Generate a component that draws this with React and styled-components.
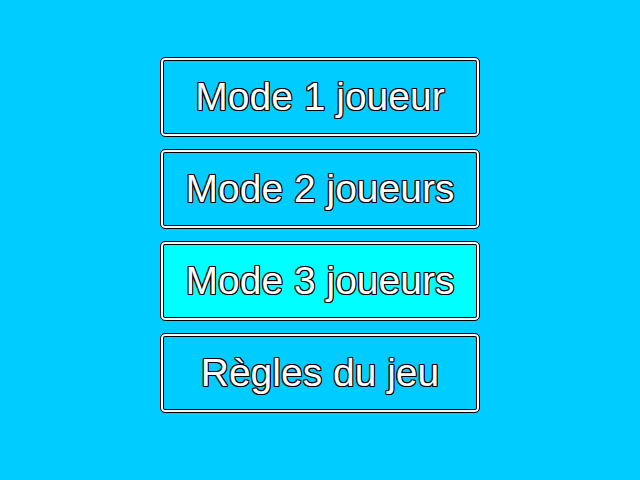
import styled, { createGlobalStyle } from "styled-components";

const GlobalStyle = createGlobalStyle`
  html, body {
    margin: 0;
    padding: 0;
    background: #00ccff;
  }
`;

const Screen = styled.main`
  width: 640px;
  height: 480px;
  background: #00ccff;
  display: flex;
  flex-direction: column;
  align-items: center;
  gap: 12px;
  padding-top: 57px;
  box-sizing: border-box;
  font-family: "Liberation Sans", Arial, sans-serif;
`;

const MenuButton = styled.button`
  width: 320px;
  height: 80px;
  box-sizing: border-box;
  margin: 0;
  padding: 0 0 2px 0;
  border: 1px solid #000;
  border-radius: 5px;
  box-shadow: inset 0 0 0 2px #fff, inset 0 0 0 3px #000;
  background: ${({ $active }) => ($active ? "#00ffff" : "#00ccff")};
  color: #fff;
  font-family: inherit;
  font-size: 39px;
  line-height: 1;
  display: flex;
  align-items: center;
  justify-content: center;
  cursor: pointer;
  text-shadow:
    -1px -1px 0 #000,
    0 -1px 0 #000,
    1px -1px 0 #000,
    -1px 0 0 #000,
    1px 0 0 #000,
    -1px 1px 0 #000,
    0 1px 0 #000,
    1px 1px 0 #000;
`;

const items = [
  { label: "Mode 1 joueur" },
  { label: "Mode 2 joueurs" },
  { label: "Mode 3 joueurs", active: true },
  { label: "Règles du jeu" },
];

export default function App() {
  return (
    <>
      <GlobalStyle />
      <Screen>
        {items.map(({ label, active }) => (
          <MenuButton key={label} $active={active}>
            {label}
          </MenuButton>
        ))}
      </Screen>
    </>
  );
}
